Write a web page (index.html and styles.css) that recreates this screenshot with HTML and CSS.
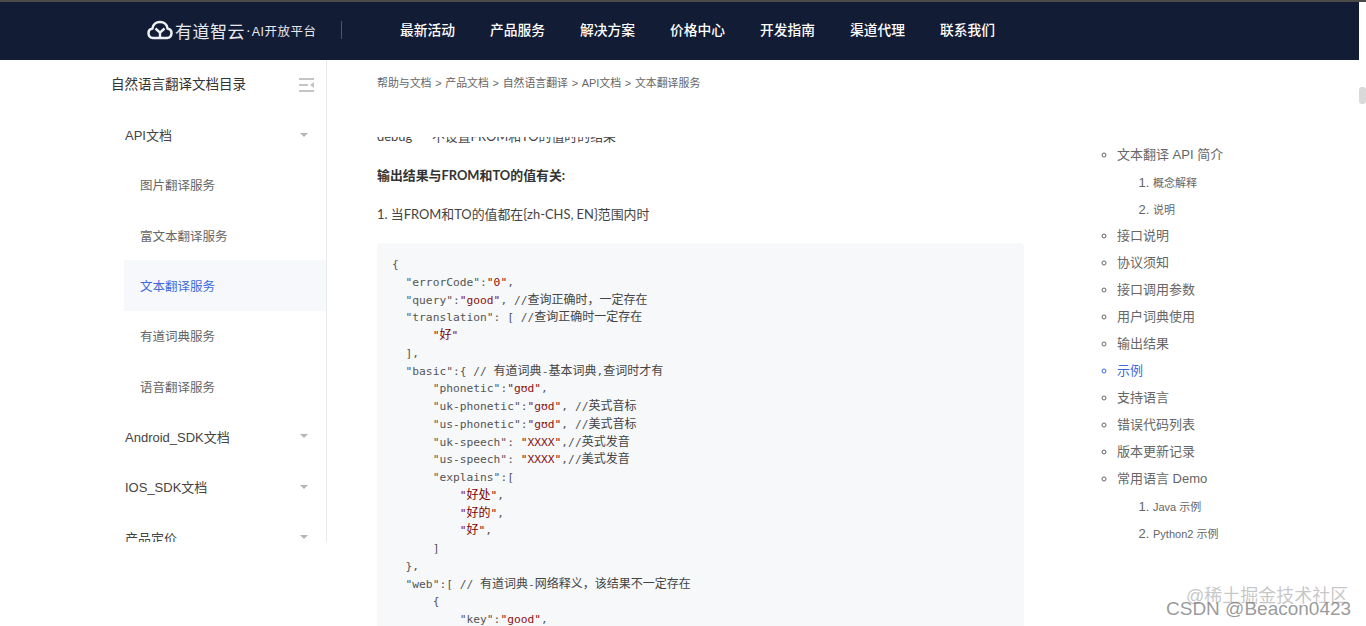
FILE: index.html
```html
<!DOCTYPE html>
<html lang="zh">
<head>
<meta charset="utf-8">
<title>文本翻译服务</title>
<link rel="stylesheet" href="styles.css">
</head>
<body>
<div class="page">
  <header class="topbar">
    <div class="brand">
      <svg class="brand-icon" viewBox="0 0 26 20" width="26" height="20"><path d="M7 18H6a4.800 4.800 0 0 1-.6-9.500C6.200 4.300 9.300 2 13 2c3.700 0 6.800 2.300 7.600 6.500A4.800 4.800 0 0 1 20 18H7z" fill="none" stroke="#eef0f3" stroke-width="2.500"/><path d="M8.500 8.500l4.500 4.200 4.500-4.200M13 12.500V18" fill="none" stroke="#eef0f3" stroke-width="2.400"/></svg>
      <span class="brand-name">有道智云</span><span class="brand-dot">·</span><span class="brand-sub">AI开放平台</span>
    </div>
    <nav class="nav">
      <a>最新活动</a><a>产品服务</a><a>解决方案</a><a>价格中心</a><a>开发指南</a><a>渠道代理</a><a>联系我们</a>
    </nav>
  </header>
  <div class="body">
    <aside class="side">
      <div class="side-head">
        <span>自然语言翻译文档目录</span>
        <svg class="side-icon" viewBox="0 0 15 14" width="15" height="14"><path d="M0 1h15M0 7h9M0 13h15" stroke="#c4c4c4" stroke-width="2"/><path d="M15 4v6l-4-3z" fill="#c4c4c4"/></svg>
      </div>
      <div class="side-list">
        <div class="side-item top">API文档<i class="caret"></i></div>
        <div class="side-item sub">图片翻译服务</div>
        <div class="side-item sub">富文本翻译服务</div>
        <div class="side-item sub active">文本翻译服务</div>
        <div class="side-item sub">有道词典服务</div>
        <div class="side-item sub">语音翻译服务</div>
        <div class="side-item top">Android_SDK文档<i class="caret"></i></div>
        <div class="side-item top">IOS_SDK文档<i class="caret"></i></div>
        <div class="side-item top">产品定价<i class="caret"></i></div>
      </div>
    </aside>
    <main class="main">
      <div class="crumbs">帮助与文档 &gt; 产品文档 &gt; 自然语言翻译 &gt; API文档 &gt; 文本翻译服务</div>
      <div class="doc-window">
        <div class="doc">
          <p class="cut">debug&nbsp; &nbsp; &nbsp; 不设置FROM和TO的值时的结果</p>
          <p class="strong">输出结果与FROM和TO的值有关:</p>
          <p class="last">1. 当FROM和TO的值都在{zh-CHS, EN}范围内时</p>
<pre class="code">{
  <b>"errorCode"</b>:<s>"0"</s>,
  <b>"query"</b>:<s>"good"</s>, //<i>查询正确时，一定存在</i>
  <b>"translation"</b>: [ //<i>查询正确时一定存在</i>
      <s>"<i>好</i>"</s>
  ],
  <b>"basic"</b>:{ // <i>有道词典</i>-<i>基本词典</i>,<i>查词时才有</i>
      <b>"phonetic"</b>:<s>"gʊd"</s>,
      <b>"uk-phonetic"</b>:<s>"gʊd"</s>, //<i>英式音标</i>
      <b>"us-phonetic"</b>:<s>"gʊd"</s>, //<i>美式音标</i>
      <b>"uk-speech"</b>: <s>"XXXX"</s>,//<i>英式发音</i>
      <b>"us-speech"</b>: <s>"XXXX"</s>,//<i>美式发音</i>
      <b>"explains"</b>:[
          <s>"<i>好处</i>"</s>,
          <s>"<i>好的</i>"</s>,
          <s>"<i>好</i>"</s>,
      ]
  },
  <b>"web"</b>:[ // <i>有道词典</i>-<i>网络释义，该结果不一定存在</i>
      {
          <b>"key"</b>:<s>"good"</s>,
          <b>"value"</b>:[<s>"<i>良好</i>"</s>,<s>"<i>善</i>"</s>,<s>"<i>商品</i>"</s>]
      }
  ]
}</pre>
        </div>
      </div>
    </main>
    <aside class="toc">
      <ul>
        <li>文本翻译 API 简介
          <ol><li>概念解释</li><li>说明</li></ol>
        </li>
        <li>接口说明</li>
        <li>协议须知</li>
        <li>接口调用参数</li>
        <li>用户词典使用</li>
        <li>输出结果</li>
        <li class="on">示例</li>
        <li>支持语言</li>
        <li>错误代码列表</li>
        <li>版本更新记录</li>
        <li>常用语言 Demo
          <ol><li>Java 示例</li><li>Python2 示例</li></ol>
        </li>
      </ul>
    </aside>
  </div>
  <div class="thumb"></div>
  <div class="mark mark-a">@稀土掘金技术社区</div>
  <div class="mark mark-b">CSDN @Beacon0423</div>
</div>
</body>
</html>
```
FILE: styles.css
```css
* { box-sizing: border-box; }
html, body { margin: 0; height: 100%; }
body { font-family: "Liberation Sans", "Noto Sans CJK SC", sans-serif; background: #fff; color: #333; overflow: hidden; }
.page { position: relative; width: 1366px; height: 626px; overflow: hidden; }

.topbar { height: 60px; background: linear-gradient(#4a4a48 2px, #131c35 2px) 0 0 / 1359px 100% no-repeat, linear-gradient(#4a4a48 2px, #fff 2px); display: flex; align-items: center; padding-top: 2px; padding-bottom: 4px; }
.brand { width: 195px; margin-left: 147px; margin-top: 2px; height: 18px; border-right: 1px solid #4b5468; display: flex; align-items: center; color: #e6e8ec; white-space: nowrap; }
.brand-icon { flex: none; margin-right: 2px; }
.brand-name { font-size: 17px; letter-spacing: .5px; }
.brand-dot { font-size: 14px; margin: 0 1px; }
.brand-sub { font-size: 12.500px; letter-spacing: .5px; }
.nav { display: flex; gap: 35px; margin-left: 58px; }
.nav a { font-size: 13.750px; width: 55px; color: #fff; white-space: nowrap; font-weight: 500; }

.body { display: flex; height: 566px; align-items: flex-start; }
.side { width: 327px; height: 482px; flex: none; border-right: 1px solid #e8eaee; padding-left: 111px; overflow: hidden; }
.side-head { height: 46px; display: flex; align-items: center; justify-content: space-between; padding-right: 12px; font-size: 13.500px; color: #333; }
.side-icon { margin-top: 3px; }
.side-list { padding-top: 3.500px; }
.side-item { height: 50.300px; display: flex; align-items: center; font-size: 13px; position: relative; }
.top { padding-left: 14px; color: #444; }
.sub { color: #666; margin-left: 13px; padding-left: 16px; font-size: 12.500px; }
.active { background: #f6f8fc; color: #3c6ae0; }
.caret { position: absolute; right: 18px; top: 50%; margin-top: -2px; width: 0; height: 0; border: 4px solid transparent; border-top: 4px solid #b5b5b5; border-bottom: 0; }

.main { width: 648px; flex: none; margin-left: 50px; position: relative; }
.crumbs { font-size: 10.900px; color: #666; height: 77px; padding-top: 15px; line-height: 16px; word-spacing: .7px; }
.doc-window { height: 489px; overflow: hidden; }
.doc { margin-top: -11px; font-family: Lato, "Noto Sans CJK SC", sans-serif; font-size: 12.900px; color: #444; }
.doc p { margin: 0 0 19px; line-height: 20px; height: 20px; }
.doc .last { margin-bottom: 19px; }
.doc .strong { font-weight: 700; color: #333; }
.code { margin: 0; background: #f6f8fa; border-radius: 4px; padding: 13px 15px 10px; width: 647px; font-family: "DejaVu Sans Mono", "Liberation Mono", "Noto Sans CJK SC", monospace; font-size: 11.250px; line-height: 17.750px; color: #555; }
.code b { font-weight: 400; color: #555; }
.code s { text-decoration: none; color: #8a1010; }
.code i { font-family: "Noto Sans CJK SC", sans-serif; font-style: normal; font-size: 12px; line-height: 0; color: #444; }
.code s i { color: #7a0000; }

.toc { margin-left: 75px; padding-top: 81px; font-size: 13px; color: #666; }
.toc ul { margin: 0; padding: 0 0 0 17px; list-style: circle; }
.toc li { line-height: 27px; height: auto; }
.toc .on { color: #3c6ae0; }
.toc ol { margin: 1px 0 -1px; padding: 0 0 0 36px; font-size: 11px; }
.toc ol li { height: 27px; }
.toc ol li::marker { font-size: 13px; }

.thumb { position: absolute; right: 0; top: 87px; width: 7px; height: 17px; background: #d9d9d9; border-radius: 3px; }
.mark { position: absolute; white-space: nowrap; }
.mark-a { left: 1186px; top: 581px; font-size: 18px; color: rgba(150,150,150,.55); }
.mark-b { left: 1166px; top: 598px; font-size: 19px; color: rgba(110,110,110,.7); }
```
